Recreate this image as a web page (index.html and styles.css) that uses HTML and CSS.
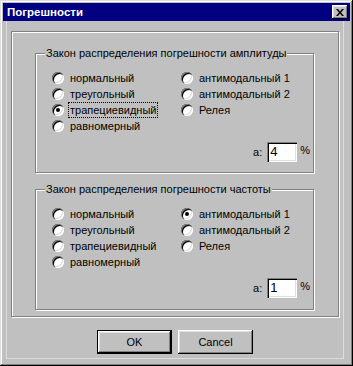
FILE: index.html
```html
<!DOCTYPE html>
<html lang="ru">
  <head>
    <meta charset="UTF-8" />
    <title>Погрешности</title>
    <link rel="stylesheet" href="styles.css">
  </head>
  <body>
    <div class="window">
      <div class="titlebar">
        <span class="title">Погрешности</span>
        <button class="close" type="button" aria-label="Закрыть">
          <svg width="8" height="7" viewBox="0 0 8 7">
            <path d="M0 0h2l2 2.5L6 0h2L5 3.5 8 7H6L4 4.5 2 7H0l3-3.5z" fill="#000"/>
          </svg>
        </button>
      </div>
      <div class="client">
        <div class="panel">
          <div class="group">
            <span class="legend">Закон распределения погрешности амплитуды</span>
            <div class="options">
              <label class="option"><span class="radio"></span><span class="text">нормальный</span></label>
              <label class="option"><span class="radio"></span><span class="text">антимодальный 1</span></label>
              <label class="option"><span class="radio"></span><span class="text">треугольный</span></label>
              <label class="option"><span class="radio"></span><span class="text">антимодальный 2</span></label>
              <label class="option"><span class="radio checked"></span><span class="text focus">трапециевидный</span></label>
              <label class="option"><span class="radio"></span><span class="text">Релея</span></label>
              <label class="option"><span class="radio"></span><span class="text">равномерный</span></label>
            </div>
            <div class="param">
              <span>a:</span>
              <span class="field">4</span>
              <span class="unit">%</span>
            </div>
          </div>
          <div class="group second">
            <span class="legend">Закон распределения погрешности частоты</span>
            <div class="options">
              <label class="option"><span class="radio"></span><span class="text">нормальный</span></label>
              <label class="option"><span class="radio checked"></span><span class="text">антимодальный 1</span></label>
              <label class="option"><span class="radio"></span><span class="text">треугольный</span></label>
              <label class="option"><span class="radio"></span><span class="text">антимодальный 2</span></label>
              <label class="option"><span class="radio"></span><span class="text">трапециевидный</span></label>
              <label class="option"><span class="radio"></span><span class="text">Релея</span></label>
              <label class="option"><span class="radio"></span><span class="text">равномерный</span></label>
            </div>
            <div class="param">
              <span>a:</span>
              <span class="field">1</span>
              <span class="unit">%</span>
            </div>
          </div>
        </div>
        <div class="buttons">
          <button class="btn default" type="button">OK</button>
          <button class="btn" type="button">Cancel</button>
        </div>
      </div>
    </div>
  </body>
</html>
```

FILE: styles.css
```css
body {
  margin: 0;
  background: #c0c0c0;
  font-family: "Liberation Sans", Arial, sans-serif;
  font-size: 11px;
  color: #000;
}
.window {
  box-sizing: border-box;
  width: 353px;
  height: 366px;
  padding: 3px;
  background: #c0c0c0;
  display: flex;
  flex-direction: column;
  box-shadow: inset -1px -1px #000, inset 1px 1px #dfdfdf,
    inset -2px -2px #808080, inset 2px 2px #fff;
}
.titlebar {
  flex: none;
  height: 18px;
  background: #000080;
  display: flex;
  align-items: center;
  justify-content: space-between;
  padding: 0 2px 0 4px;
}
.title {
  color: #fff;
  font-weight: bold;
  font-size: 11.5px;
}
.close {
  width: 16px;
  height: 14px;
  padding: 0;
  border: none;
  background: #c0c0c0;
  display: flex;
  align-items: center;
  justify-content: center;
  box-shadow: inset -1px -1px #000, inset 1px 1px #fff,
    inset -2px -2px #808080, inset 2px 2px #dfdfdf;
}
/* inner frame of the dialog body */
.client {
  flex: 1;
  display: flex;
  flex-direction: column;
  margin: 0 6px 4px 3px;
  padding: 10px 4px 0 4px;
  border: 1px solid #dcdcdc;
  border-top: none;
}
.panel {
  height: 286px;
  box-sizing: border-box;
  border: 1px solid #808080;
  box-shadow: inset 1px 1px #fff, 1px 1px #fff;
  padding: 21px 0 0 23px;
}
.group {
  position: relative;
  box-sizing: border-box;
  width: 279px;
  height: 120px;
  border: 1px solid #808080;
  box-shadow: inset 1px 1px #fff, 1px 1px #fff;
  padding: 16px 3px 0 16px;
}
.group.second {
  margin-top: 16px;
  height: 121px;
}
.legend {
  position: absolute;
  top: -8px;
  left: 9px;
  line-height: 15px;
  padding: 0 1px;
  background: #c0c0c0;
}
.options {
  display: grid;
  grid-template-columns: 129px auto;
  grid-auto-rows: 16px;
}
.option {
  display: flex;
  align-items: center;
}
.radio {
  position: relative;
  width: 12px;
  height: 12px;
  margin-right: 4px;
  border-radius: 50%;
  background: #fff;
  box-shadow: inset 1px 1px #808080, inset 2px 2px #000,
    inset -1px -1px #fff, inset -2px -2px #dfdfdf;
}
.radio.checked::after {
  content: "";
  position: absolute;
  left: 4px;
  top: 4px;
  width: 4px;
  height: 4px;
  border-radius: 50%;
  background: #000;
}
.text {
  border: 1px solid transparent;
  padding: 0 1px;
  line-height: 14px;
}
.text.focus {
  border: 1px dotted #000;
}
.param {
  display: flex;
  align-items: center;
  justify-content: flex-end;
  margin-top: 8px;
}
.field {
  box-sizing: border-box;
  width: 30px;
  height: 20px;
  margin: 0 3px 0 5px;
  padding: 1px 0 0 3px;
  background: #fff;
  font-size: 13px;
  line-height: 18px;
  box-shadow: inset 1px 1px #808080, inset 2px 2px #000,
    inset -1px -1px #fff, inset -2px -2px #dfdfdf;
}
.unit {
  font-size: 11px;
  margin-top: -4px;
}
.buttons {
  display: flex;
  justify-content: center;
  gap: 6px;
  margin-top: 13px;
}
.btn {
  box-sizing: border-box;
  width: 75px;
  height: 24px;
  padding: 0;
  border: none;
  background: #c0c0c0;
  font-family: "Liberation Sans", Arial, sans-serif;
  font-size: 11px;
  color: #000;
  box-shadow: inset -1px -1px #000, inset 1px 1px #fff,
    inset -2px -2px #808080, inset 2px 2px #dfdfdf;
}
.btn.default {
  box-shadow: inset 0 0 0 1px #000, inset -2px -2px #000, inset 2px 2px #fff,
    inset -3px -3px #808080, inset 3px 3px #dfdfdf;
}
```
